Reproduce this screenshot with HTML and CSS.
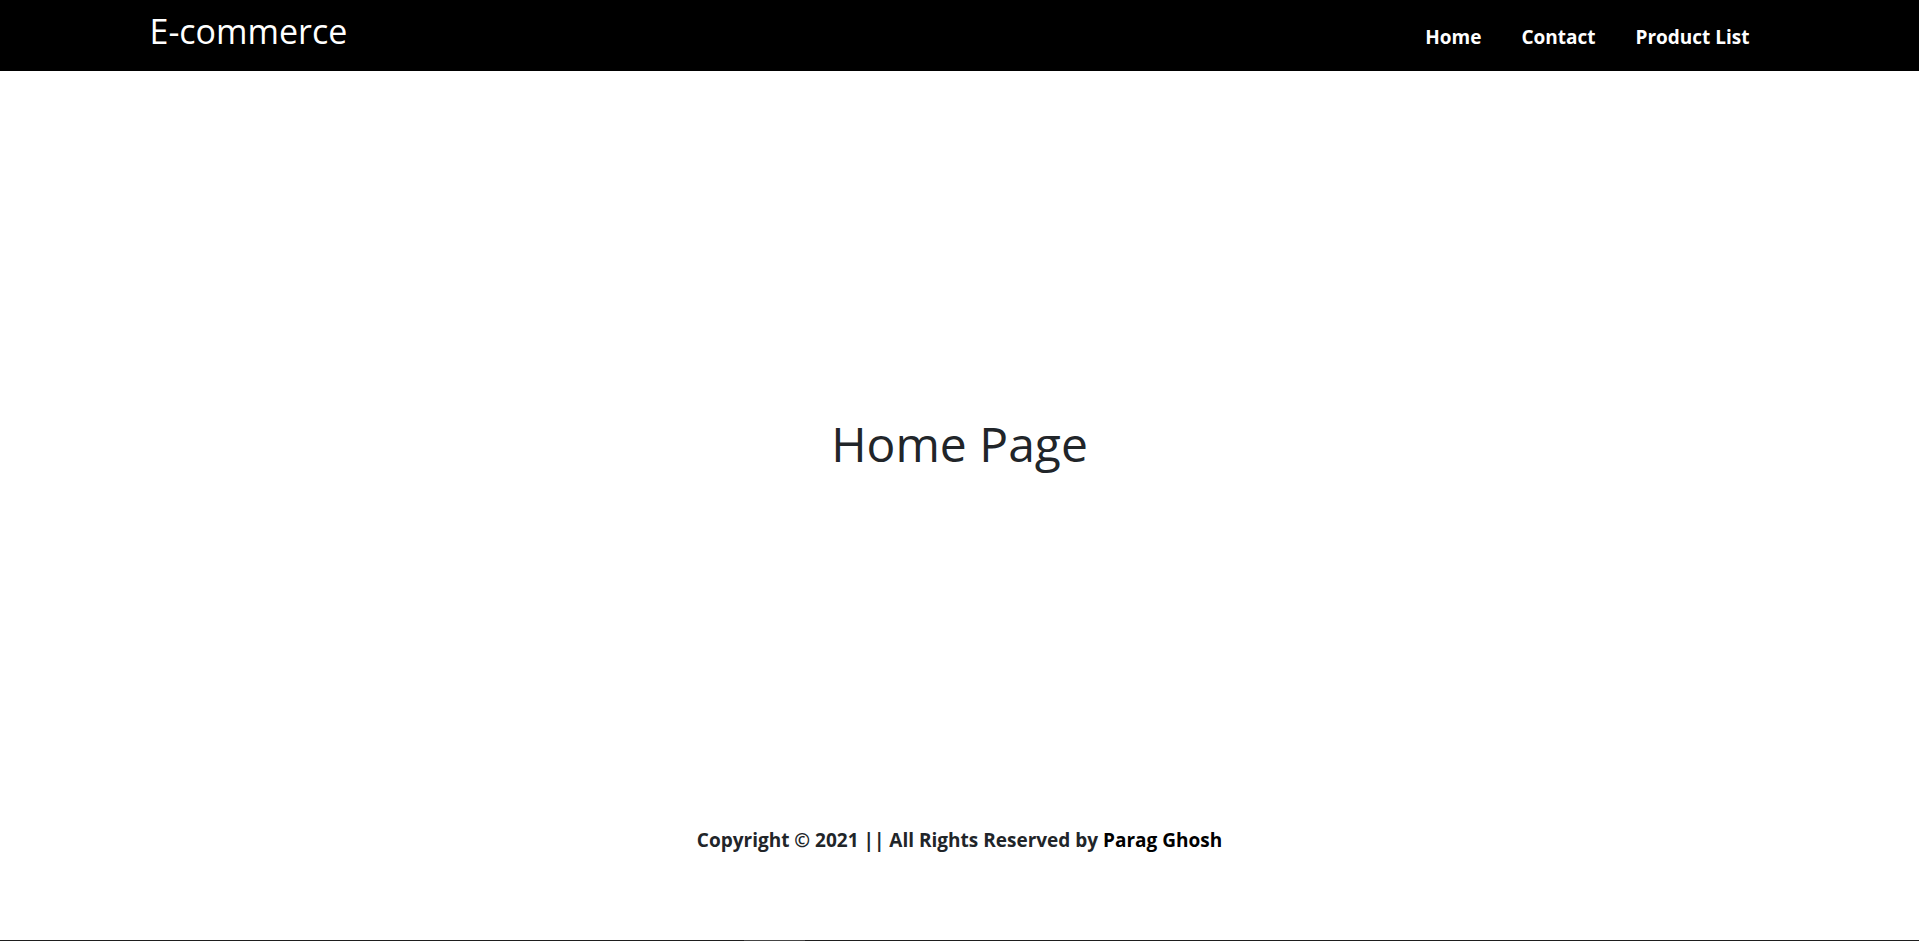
FILE: index.html
```html
<!DOCTYPE html>
<html>
<head>
  <title>E-commerce</title>
  <link rel="stylesheet" href="styles.css">
</head>
<body>

  <nav class="navbar">
    <div class="nav-inner">
      <a class="brand" href="#">E-commerce</a>
      <ul class="nav-links">
        <li><a href="#">Home</a></li>
        <li><a href="#">Contact</a></li>
        <li><a href="#">Product List</a></li>
      </ul>
    </div>
  </nav>

  <main class="content">
    <h1>Home Page</h1>
  </main>

  <footer class="footer">
    <p>Copyright &copy; 2021 || All Rights Reserved by <span class="author">Parag Ghosh</span></p>
  </footer>

  <div class="bottom-line"></div>

</body>
</html>
```

FILE: styles.css
```css
* {
  box-sizing: border-box;
}
html, body {
  margin: 0;
  height: 100%;
}
body {
  font-family: "Open Sans", "Noto Sans", Arial, sans-serif;
  color: #212529;
  background: #fff;
  display: flex;
  flex-direction: column;
  min-height: 100vh;
  overflow: hidden;
}
a {
  text-decoration: none;
}

/* navbar */
.navbar {
  background: #000;
  height: 71px;
  padding-top: 11px;
}
.nav-inner {
  max-width: 1620px;
  margin: 0 auto;
  display: flex;
  align-items: baseline;
  justify-content: space-between;
}
.brand {
  color: #fff;
  font-size: 34px;
  line-height: 40px;
}
.nav-links {
  list-style: none;
  margin: 0;
  padding: 0;
  display: flex;
}
.nav-links a {
  display: block;
  color: #fff;
  font-size: 19px;
  font-weight: 700;
  line-height: 30px;
  padding: 0 20px;
}

/* main */
.content {
  flex: 1;
  display: flex;
  align-items: center;
  justify-content: center;
  padding-top: 10px;
}
.content h1 {
  margin: 0;
  font-size: 48px;
  font-weight: 400;
  line-height: 54px;
}

/* footer */
.footer {
  padding: 19px 0 84px;
  text-align: center;
}
.footer p {
  margin: 0;
  font-size: 19px;
  font-weight: 700;
  line-height: 30px;
}
.author {
  color: #000;
}
.bottom-line {
  height: 2px;
  background: linear-gradient(to bottom, #fff 1px, transparent 1px),
              linear-gradient(to right, #1e1e1e 744px, #444 744px, #444 805px, #1e1e1e 805px);
}
```
